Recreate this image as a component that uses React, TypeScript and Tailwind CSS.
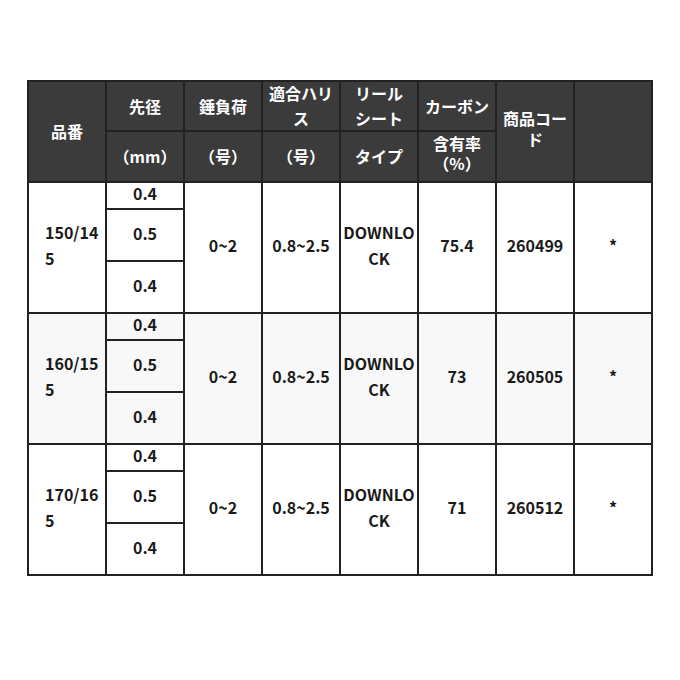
import React from "react";

const FONT = "font-['Noto_Sans_CJK_JP',sans-serif]";

type Row = { name: string; carbon: string; code: string; bg: string };

const rows: Row[] = [
  { name: "150/145", carbon: "75.4", code: "260499", bg: "bg-white" },
  { name: "160/155", carbon: "73", code: "260505", bg: "bg-[#f8f8f8]" },
  { name: "170/165", carbon: "71", code: "260512", bg: "bg-white" },
];

function H({ children, className = "" }: { children?: React.ReactNode; className?: string }) {
  return (
    <div className={`flex items-center justify-center bg-[#3b3b3b] text-center text-white break-all ${className}`}>
      <div>{children}</div>
    </div>
  );
}

function D({ children, className = "" }: { children?: React.ReactNode; className?: string }) {
  return (
    <div className={`flex items-center justify-center pb-[5px] text-center text-[#1a1a1a] break-all leading-[26px] ${className}`}>
      <div>{children}</div>
    </div>
  );
}

export default function App() {
  return (
    <div className={`min-h-[680px] w-[680px] bg-white pt-[80px] ${FONT} text-[16px] font-bold`}>
      <div className="mx-auto grid w-[626px] grid-cols-[repeat(8,76px)] grid-rows-[48px_49px_25px_50px_50px_25px_50px_50px_25px_50px_50px] gap-[2px] bg-[#222222] p-[2px]">
        {/* header row 1 */}
        <H className="row-span-2 leading-[25px]">品番</H>
        <H className="leading-[25px]">先径</H>
        <H className="leading-[25px]">錘負荷</H>
        <H className="leading-[25px]">適合ハリス</H>
        <H className="leading-[25px]">
          リール
          <br />
          シート
        </H>
        <H className="leading-[25px]">カーボン</H>
        <H className="row-span-2 pb-[5px] leading-[21px]">商品コード</H>
        <H className="row-span-2" />
        {/* header row 2 */}
        <H className="leading-[25px]">（mm）</H>
        <H className="leading-[25px]">（号）</H>
        <H className="leading-[25px]">（号）</H>
        <H className="leading-[25px]">タイプ</H>
        <H className="pb-[7px] leading-[20px]">含有率（%）</H>
        {/* data */}
        {rows.map((r) => (
          <React.Fragment key={r.code}>
            <D className={`row-span-3 justify-start pl-[16px] pr-[4px] text-left ${r.bg}`}>{r.name}</D>
            <D className={r.bg}>0.4</D>
            <D className={`row-span-3 ${r.bg}`}>0~2</D>
            <D className={`row-span-3 ${r.bg}`}>0.8~2.5</D>
            <D className={`row-span-3 ${r.bg}`}>DOWNLOCK</D>
            <D className={`row-span-3 ${r.bg}`}>{r.carbon}</D>
            <D className={`row-span-3 ${r.bg}`}>{r.code}</D>
            <D className={`row-span-3 ${r.bg}`}>*</D>
            <D className={r.bg}>0.5</D>
            <D className={r.bg}>0.4</D>
          </React.Fragment>
        ))}
      </div>
    </div>
  );
}
